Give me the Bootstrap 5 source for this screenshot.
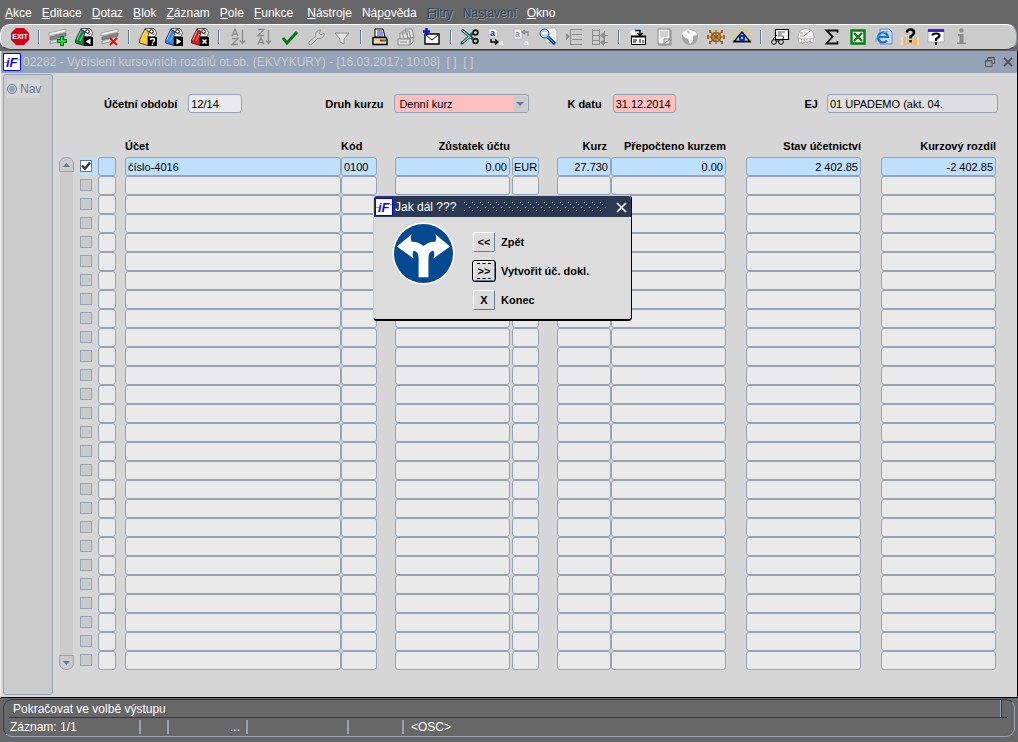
<!DOCTYPE html>
<html lang="cs">
<head>
<meta charset="utf-8">
<meta name="viewport" content="width=device-width, initial-scale=1">
<title>Vyčíslení kursovních rozdílů</title>
<link href="https://cdn.jsdelivr.net/npm/bootstrap@5.3.0/dist/css/bootstrap.min.css" rel="stylesheet">
<style>
:root{--line:#95a3b8;--navy:#2b3a52;--face:#cbcbcb;--canvas:#d6d6d6;--dark:#676767}
body{font:12px/16px "Liberation Sans",Arial,sans-serif;color:#000;background:var(--dark)}
.menubar{height:24px;gap:10px;padding:2px 5px 0;color:#fff}
.menubar div{gap:10px}
.menubar a{color:inherit;text-decoration:none}
.menubar a.off{color:#34445c;text-shadow:1px 1px 0 #8d9aa8}
.toolbar{height:26px;margin-right:1px;padding-left:6px;background:var(--face);border:1px solid #fff;border-bottom:1px solid var(--navy);border-right-color:var(--line);border-radius:10px}
.tool{width:26px;height:24px;border-radius:0;line-height:0}
.tool svg{width:20px;height:20px}
.divide{width:12px;height:14px;flex:none}
.divide::before{content:"";display:block;width:2px;height:14px;margin-left:5px;background:linear-gradient(90deg,#5f7a99 50%,#eee 50%)}
.win{border-left:1px solid #eee;border-right:1px solid #000;border-bottom:1px solid #000;background:var(--canvas);margin-top:1px}
.win-title{height:22px;padding-left:2px;padding-right:1px;background:var(--line);color:#ccc;gap:2px}
.logo{width:18px;height:18px;flex:none}
.logo text{font:italic bold 13px "Liberation Sans",Arial,sans-serif;fill:#1010c0}
.winbtn{width:16px;height:18px;line-height:0}
.side{width:50px;margin:1px 0 2px 2px;padding:4px 0 0 3px;background:var(--face);border:1px solid var(--line);border-radius:3px}
.navtag{width:33px;height:19px;background:#d6d6d6;color:#5f7a99;gap:3px}
.navtag input{appearance:none;flex:none;width:10px;height:10px;margin:0;border:1px solid #5f7a99;border-radius:50%;background:var(--line);box-shadow:inset 0 0 0 1px #d6d6d6}
.work{padding:21px 21px 27px 6px;font-size:11px;line-height:14px}
.formrow{height:19px;margin-bottom:25px;padding-left:45px}
.formrow label{font-weight:bold;margin-right:11px}
.formrow label.ms-auto{margin-right:9px}
.fld{display:block;height:19px;padding:0 2px;border:1px solid var(--line);border-radius:3px;background:#eaeaea;color:#000;outline:0;font-size:11px;line-height:17px;min-width:0}
.cur .fld{padding:0 0 0 1px}
.pink{background-color:#ffbfbf}
.f-period{width:54px;margin-right:83px}.f-kind{width:135px;margin-right:38px}.f-date{width:63px}.f-unit{width:171px;background:#dfdfdf;margin-right:-2px}
select.fld{appearance:none;padding:1px 4px 0;background-repeat:no-repeat;background-position:right 1px center;background-image:url("data:image/svg+xml,%3Csvg xmlns='http://www.w3.org/2000/svg' width='14' height='15'%3E%3Cpath fill='%23cbcbcb' d='M0 0h14v15H0z'/%3E%3Cpath fill='%235f7a99' d='M3 6h8l-4 4z'/%3E%3C/svg%3E")}
.scroller{width:15px;margin:19px 6px 0 0}
.cap{height:15px;border:1px solid var(--line);background:var(--face);line-height:0}
.cap.up{border-radius:7px 7px 0 0}.cap.down{border-radius:0 0 7px 7px}
.track{margin:0 1px;background:var(--face)}
.ledger{table-layout:fixed;width:100%;border-collapse:separate;border-spacing:0}
.ledger th,.ledger td{height:19px;padding:0;vertical-align:top}
.ledger .g2{padding-left:2px}.ledger .g9{padding-left:9px}.ledger .g18{padding-left:18px}.ledger .g20{padding-left:20px}
.ledger th{white-space:nowrap;padding-top:1px}
.ledger .r,.ledger .r .fld{text-align:right}
.c-18{width:18px}.c-29{width:29px}.c-36{width:36px}.c-72{width:72px}.c-115{width:115px}.c-133{width:133px}.c-135{width:135px}
.tick{appearance:none;display:block;width:12px;height:12px;margin:0;border:1px solid var(--line);background:var(--face)}
.tick:checked{border-color:#5f7a99;background:#fff url("data:image/svg+xml,%3Csvg xmlns='http://www.w3.org/2000/svg' viewBox='0 0 10 10'%3E%3Cpath fill='none' stroke='%232b3a52' stroke-width='2.4' d='M1 4.5l3 3.2L9 1.5'/%3E%3C/svg%3E")}
.current .fld,.current .tickbox{background:#bfdfff}
.tickbox{width:17px;height:18px;padding-top:3px}
.ask{left:calc(50% - 136px);top:195px;width:259px;background:#dcdcdc;border:1px solid var(--face);border-right:1px solid #000;border-bottom:2px solid #000;border-radius:4px;overflow:hidden}
.ask-title{height:21px;background:var(--navy);color:#fff;gap:2px;padding:0 4px 0 1px}
.dots{height:11px;margin:0 8px 0 6px}
.ask-body{padding:5px 18px 9px 18px}
.sign{width:63px;height:63px;margin-right:18px}
.choices{gap:9px;padding-top:10px}
.choices label{font-size:11px;font-weight:bold}
.choice{gap:6px}
.key{width:22px;height:20px;padding:0;border:1px solid #fff;border-right-color:#5f7a99;border-bottom-color:#5f7a99;border-radius:2px;background:#dcdcdc;color:#000;font-size:11px;font-weight:bold;line-height:16px}
.key.dflt{outline:1px solid #000}
.key.dflt span{display:block;margin:0 3px;border:1px dashed #000;border-left:0;border-right:0;line-height:14px}
.status{color:#fff;margin:1px 3px 5px;border:1px solid var(--line);border-top-color:var(--navy);border-left-color:var(--navy);border-radius:9px;height:38px}
.hint{height:18px;margin:0 7px 0 5px;padding:0 5px 0 4px;border-bottom:1px solid var(--navy)}
.hint i{width:2px;height:17px;border-left:1px solid var(--line);border-right:1px solid var(--navy)}
.panes{height:18px;padding:2px 0 2px 6px}
.panes span{line-height:14px;border-right:2px solid var(--navy);border-image:linear-gradient(90deg,var(--navy) 50%,var(--line) 50%) 0 2 0 0;border-image-width:0 2px 0 0}
.panes .p1{width:131px}.panes .p2{width:28px}.panes .p3{width:79px;padding-right:6px;text-align:right}.panes .p4{width:101px}.panes .p5{width:55px}
.panes .p6{border:0;padding-left:7px}
</style>
</head>
<body class="min-vh-100 d-flex flex-column">

<svg width="0" height="0" class="position-absolute" aria-hidden="true">
  <symbol id="binder" viewBox="0 0 20 20"><path d="M7 1.500h9l2.500 4-1 4h-8z" fill="#f4f4f4" stroke="#555"/><path d="M9 3l7 5M12 2.500l5 5" stroke="#888"/><circle cx="13.500" cy="4.500" r="1.800" fill="#fff" stroke="#000"/><path d="M7 2L1.500 13v3L10 18.500V9L11 5z" fill="currentColor" stroke="#222" stroke-width=".8"/><path d="M7 4l-4 9M9.500 7L6 14" stroke="#fff" stroke-opacity=".6"/><rect x="10" y="10" width="9" height="9" fill="#000"/></symbol>
  <symbol id="sheet" viewBox="0 0 20 20"><path d="M1 6l17-4v3L1 9z" fill="#f2f2f2" stroke="#999" stroke-width=".8"/><path d="M2 10l16-4v3L2 13z" fill="#888" stroke="#555" stroke-width=".6"/><path d="M2 14l14-4v3L2 17z" fill="#ddd" stroke="#888" stroke-width=".8"/></symbol>
</svg>

<nav class="menubar d-flex align-items-center" aria-label="Hlavní nabídka">
  <div class="d-flex"><a href="#"><u>A</u>kce</a><a href="#"><u>E</u>ditace</a><a href="#"><u>D</u>otaz</a><a href="#"><u>B</u>lok</a><a href="#"><u>Z</u>áznam</a><a href="#"><u>P</u>ole</a><a href="#"><u>F</u>unkce</a></div>
  <div class="d-flex ms-1"><a href="#"><u>N</u>ástroje</a><a href="#">Náp<u>o</u>věda</a><a href="#" class="off"><u>F</u>iltry</a><a href="#" class="off">Na<u>s</u>tavení</a><a href="#"><u>O</u>kno</a></div>
</nav>

<div class="toolbar d-flex align-items-center" role="toolbar" aria-label="Panel nástrojů">
  <button class="btn tool p-0 border-0" aria-label="Konec"><svg viewBox="0 0 20 20"><path d="M6 1h8l5 5v7l-5 5H6l-5-5V6z" fill="#d8001c"/><text x="10" y="12" text-anchor="middle" font-family="Liberation Sans" font-size="7" font-weight="bold" fill="#fff">EXIT</text></svg></button>
  <span class="divide"></span>
  <button class="btn tool p-0 border-0" aria-label="Vložit záznam"><svg viewBox="0 0 20 20"><use href="#sheet"/><path d="M14 9v10M9 14h10" stroke="#063" stroke-width="4"/><path d="M14 10v8M10 14h8" stroke="#2d2" stroke-width="2"/></svg></button>
  <button class="btn tool p-0 border-0" aria-label="Předchozí blok"><svg viewBox="0 0 20 20" color="#0a8a3a"><use href="#binder"/><path d="M16.500 11.500v6l-5-3z" fill="#fff"/></svg></button>
  <button class="btn tool p-0 border-0" aria-label="Smazat záznam"><svg viewBox="0 0 20 20"><use href="#sheet"/><path d="M10 11l7 7M17 11l-7 7" stroke="#e01010" stroke-width="2"/></svg></button>
  <span class="divide"></span>
  <button class="btn tool p-0 border-0" aria-label="Zadat dotaz"><svg viewBox="0 0 20 20" color="#ffc820"><use href="#binder"/><path d="M12.500 13q0-1.500 2-1.500t2 1.500q0 1-2 2.500M14.500 16.500v1.500" fill="none" stroke="#fff" stroke-width="1.500"/></svg></button>
  <button class="btn tool p-0 border-0" aria-label="Provést dotaz"><svg viewBox="0 0 20 20" color="#2888f0"><use href="#binder"/><path d="M12.500 11.500v6l5-3z" fill="#fff"/></svg></button>
  <button class="btn tool p-0 border-0" aria-label="Zrušit dotaz"><svg viewBox="0 0 20 20" color="#e01818"><use href="#binder"/><path d="M12.500 12.500l4 4M16.500 12.500l-4 4" stroke="#fff" stroke-width="1.500"/></svg></button>
  <span class="divide"></span>
  <button class="btn tool p-0 border-0" aria-label="Seřadit vzestupně"><svg viewBox="0 0 20 20" fill="none" stroke="#8c8c8c"><path d="M4 9l3-7 3 7M5 7h4M4 11.500h6l-6 6h6M14.500 3v13M12 13.500l2.500 3 2.500-3" stroke-width="1.300"/></svg></button>
  <button class="btn tool p-0 border-0" aria-label="Seřadit sestupně"><svg viewBox="0 0 20 20" fill="none" stroke="#8c8c8c"><path d="M4 2.500h6l-6 6h6M4 17.500l3-7 3 7M5 15.500h4M14.500 3v13M12 13.500l2.500 3 2.500-3" stroke-width="1.300"/></svg></button>
  <button class="btn tool p-0 border-0" aria-label="Uložit"><svg viewBox="0 0 20 20"><path d="M3 11l4 5L17 5" fill="none" stroke="#007a1c" stroke-width="3"/></svg></button>
  <button class="btn tool p-0 border-0" aria-label="Nastavit"><svg viewBox="0 0 20 20"><path d="M3 15l7-6c-1-3 1-6 5-6l-2 3 2 2 3-2c1 4-3 6-6 5l-7 7q-3 0-2-3z" fill="#d6d6d6" stroke="#8c8c8c"/></svg></button>
  <button class="btn tool p-0 border-0" aria-label="Filtr"><svg viewBox="0 0 20 20"><path d="M3 6h14l-5 6v5l-4-2v-3z" fill="#e4e4e4" stroke="#8c8c8c"/></svg></button>
  <span class="divide"></span>
  <button class="btn tool p-0 border-0" aria-label="Tisk"><svg viewBox="0 0 20 20"><path d="M5 2h8l2 8H5z" fill="#fff" stroke="#000"/><path d="M7 4h5M7 6h6M7 8h6" stroke="#1030c0"/><path d="M3 10.500h13l1 2v5H3z" fill="#ddd" stroke="#000" stroke-width="1.400"/><path d="M4 13h7" stroke="#e0e040" stroke-width="2"/><path d="M10 13.500h3" stroke="#e00000" stroke-width="2"/><path d="M13 13.500h3" stroke="#00a000" stroke-width="2"/></svg></button>
  <button class="btn tool p-0 border-0" aria-label="Tisk více"><svg viewBox="0 0 20 20" fill="#e0e0e0" stroke="#8c8c8c"><path d="M9 2h7l2 9h-6zM6 4h7l2 8H8zM4 6h7l1 6H4z"/><path d="M2 12h12v6H2zM14 12l3-2v5l-3 3zM4 15h7"/></svg></button>
  <button class="btn tool p-0 border-0" aria-label="Poslat poštou"><svg viewBox="0 0 20 20"><path d="M3 7h14v10H3z" fill="#fff" stroke="#000" stroke-width="1.400"/><path d="M4 8l6 5 6-5" fill="none" stroke="#000"/><path d="M4.500 1v7M1 4.500h7" stroke="#0018e0" stroke-width="2.500"/></svg></button>
  <span class="divide"></span>
  <button class="btn tool p-0 border-0" aria-label="Vyjmout"><svg viewBox="0 0 20 20"><path d="M2 3l11 9M1 17L13 6" stroke="#145a60" stroke-width="3"/><path d="M2 3l9 8M2 16l8-7" stroke="#d8ffff"/><circle cx="15.500" cy="5.500" r="2.400" fill="none" stroke="#111" stroke-width="1.600"/><circle cx="15.500" cy="14" r="2.400" fill="none" stroke="#111" stroke-width="1.600"/></svg></button>
  <button class="btn tool p-0 border-0" aria-label="Kopírovat"><svg viewBox="0 0 20 20"><path d="M3 2h6l2 2v6H3z" fill="#fff" stroke="#bbb" stroke-width=".7"/><text x="4" y="9" font-family="Liberation Sans" font-size="9" font-weight="bold" fill="#0820c8">a</text><path d="M5 12v3h6M9 12.500l3 2.500-3 2.500" fill="none" stroke="#000" stroke-width="1.400"/><text x="13" y="18" font-family="Liberation Sans" font-size="8" fill="#fff">a</text></svg></button>
  <button class="btn tool p-0 border-0" aria-label="Vložit"><svg viewBox="0 0 20 20"><path d="M2 2h6l2 2v8H2z" fill="#eee" stroke="#aaa" stroke-width=".7"/><text x="3" y="10" font-family="Liberation Sans" font-size="9" fill="#888">a</text><path d="M16 9V5h-5M13 3l-3 2 3 2" fill="none" stroke="#888" stroke-width="1.300"/><text x="12" y="18" font-family="Liberation Sans" font-size="8" fill="#fff">a</text></svg></button>
  <button class="btn tool p-0 border-0" aria-label="Prohlížet"><svg viewBox="0 0 20 20"><path d="M8 1h9l2 3v12H8z" fill="#eee" stroke="#b4b4a0"/><circle cx="6.500" cy="6.500" r="4.500" fill="#a8dcf4" stroke="#348"/><path d="M4 6h5" stroke="#fff" stroke-width="2"/><path d="M10 10l7 7" stroke="#0448a8" stroke-width="3.400"/><path d="M10 10l6 6" stroke="#40b0ff"/></svg></button>
  <button class="btn tool p-0 border-0" aria-label="Odsadit"><svg viewBox="0 0 20 20"><path d="M6 2.500h12M8 7.500h10M8 12.500h10M6 17.500h12M2.500 7v6M6.500 2v16" stroke="#8c8c8c"/><path d="M2 6l4 3.500L2 13z" fill="#8c8c8c"/></svg></button>
  <button class="btn tool p-0 border-0" aria-label="Rozdělit"><svg viewBox="0 0 20 20"><path d="M2.500 2v16M9.500 2v16M3 3.500h6M3 8.500h6M3 13.500h6M3 17.500h6M11 8.500h7M11 15.500h7M14.500 4v13" stroke="#8c8c8c"/><path d="M14 5l-4 3.500L14 12zM14 12l-4 3.500L14 19z" fill="#8c8c8c"/></svg></button>
  <span class="divide"></span>
  <button class="btn tool p-0 border-0" aria-label="Kalendář"><svg viewBox="0 0 20 20"><path d="M1 1.500h13" stroke="#a8dcff"/><path d="M2 3h9v6H2z" fill="#e4e4e4"/><path d="M3 5h6M3 7h4" stroke="#fff"/><path d="M3.500 9.500h14v8h-14z" fill="#fff" stroke="#000"/><path d="M3 9.500h15" stroke="#000" stroke-width="2"/><path d="M5 13h4M5 15h3M11 13h2M11 15h2M15 13v3" stroke="#000"/><path d="M7 3.500h5v4M9.500 6l2.500 3 2.500-3" fill="none" stroke="#000" stroke-width="1.300"/></svg></button>
  <button class="btn tool p-0 border-0" aria-label="Poznámka"><svg viewBox="0 0 20 20"><path d="M4 2h12v15H4z" fill="#eee" stroke="#888"/><path d="M6 5h8M6 7h8M6 9h8" stroke="#b4b4b4"/><path d="M10 17v-5h6zM4 18h13V3" fill="none" stroke="#888"/></svg></button>
  <button class="btn tool p-0 border-0" aria-label="Internet"><svg viewBox="0 0 20 20"><circle cx="10" cy="10" r="8" fill="#a4a4a4"/><path d="M3 5l5-3 8 3 1 3-4 1v5l-3 3-2-5-4-2-2-3z" fill="#f8f8f8"/><path d="M7 3l3 2-2 2z" fill="#b4b4b4"/></svg></button>
  <button class="btn tool p-0 border-0" aria-label="Navigátor"><svg viewBox="0 0 20 20" stroke="#9a5a10" fill="none"><circle cx="10" cy="10" r="4.500" stroke-width="1.700"/><path d="M10 3v14M3 10h14M4.500 5l11 10M15.500 5l-11 10" stroke-width="1.200"/><path d="M2 8v4M18 8v4M4 3v3M16 3v3M4 14v3M16 14v3" stroke-width="1.800"/></svg></button>
  <button class="btn tool p-0 border-0" aria-label="Zobrazit"><svg viewBox="0 0 20 20"><path d="M10 5L2 14.500h16z" fill="#b8e8ff" stroke="#000" stroke-width="1.400"/><path d="M1 14.500h18" stroke="#000" stroke-width="1.500"/><circle cx="10" cy="11" r="3.200" fill="#0828e0"/><path d="M9 10h2v2H9z" fill="#8ff"/><path d="M10 1v2M5 3l1 2M15 3l-1 2M1 7l3 2M19 7l-3 2" stroke="#e8d800" stroke-width="1.500"/></svg></button>
  <span class="divide"></span>
  <button class="btn tool p-0 border-0" aria-label="Detail"><svg viewBox="0 0 20 20"><path d="M5.500 2.500h13v10h-13z" fill="#fff" stroke="#000" stroke-width="1.200"/><path d="M8 5h7M8 7h4M8 9h6" stroke="#555"/><g fill="#ddd" stroke="#000"><circle cx="4" cy="15" r="2.300"/><circle cx="11" cy="15" r="2.300"/></g><path d="M6 14h3M3 12l4-4M12 13l2-3" stroke="#000"/></svg></button>
  <button class="btn tool p-0 border-0" aria-label="Hodiny"><svg viewBox="0 0 20 20"><circle cx="10" cy="9.500" r="8" fill="#eee" stroke="#aaa"/><path d="M4 9h4l6-5M4 6h3" fill="none" stroke="#999"/><path d="M3 11.500h14v4H3z" fill="#fff" stroke="#aaa" stroke-width=".6"/><text x="4" y="15.500" font-family="Liberation Sans" font-size="5" fill="#777">1314</text></svg></button>
  <button class="btn tool p-0 border-0" aria-label="Součet"><svg viewBox="0 0 20 20"><path d="M15.500 6V3.500H4.500l6 6-6 7h11V14" fill="none" stroke="#111" stroke-width="1.800"/></svg></button>
  <button class="btn tool p-0 border-0" aria-label="Excel"><svg viewBox="0 0 20 20"><path d="M3.500 3.500h13v13h-13z" fill="#e8f4e4" stroke="#107818" stroke-width="2.400"/><path d="M6 6l8 8M14 6l-8 8" stroke="#107818" stroke-width="2.200"/></svg></button>
  <button class="btn tool p-0 border-0" aria-label="Prohlížeč"><svg viewBox="0 0 20 20"><path d="M6 2h9l3 3v12H6z" fill="#c0dcf8" stroke="#6888c0"/><path d="M13 13.500a5 5 0 1 1 1-3.500H5" fill="none" stroke="#1874d0" stroke-width="2.200"/><path d="M2 15Q0 9 14 4" fill="none" stroke="#50a8f0"/></svg></button>
  <button class="btn tool p-0 border-0" aria-label="Kontextová nápověda"><svg viewBox="0 0 20 20"><path d="M1 10h5v8H1zM7.500 12h5v6h-5zM14 10h5v8h-5z" fill="#f0b868"/><path d="M2 10v8M10 12v6M18 10v8" stroke="#fff"/><path d="M7 5.500q0-3 3.500-3T14 5.500q0 2-3.500 4v2M10.500 13v2.500" fill="none" stroke="#000" stroke-width="2.400"/></svg></button>
  <button class="btn tool p-0 border-0" aria-label="Nápověda"><svg viewBox="0 0 20 20"><path d="M2 3h16v12H2z" fill="#fff" stroke="#aaa"/><path d="M2 3.500h16" stroke="#4818e8" stroke-width="3"/><path d="M6.500 8.500q0-2 3.500-2t3.500 2q0 1.500-3.500 3.500v2M10 15.500v2.500" fill="none" stroke="#000" stroke-width="2.200"/></svg></button>
  <button class="btn tool p-0 border-0" aria-label="Informace"><svg viewBox="0 0 20 20" fill="#8c8c8c"><circle cx="9.500" cy="3.500" r="2.200"/><path d="M6 7h5.500v8.500H14V17H5v-1.500h2.500V9H6z"/></svg></button>
</div>

<div class="win flex-grow-1 d-flex flex-column">
  <header class="win-title d-flex align-items-center">
    <svg class="logo" viewBox="0 0 18 18"><path d="M.5.5h17v17H.5z" fill="#fff" stroke="#00f"/><path d="M1 9.500h3M15 6.500h2" stroke="#9ab"/><text x="3" y="14">iF</text></svg>
    <span class="flex-grow-1 text-truncate">02282 - Vyčíslení kursovních rozdílů ot.ob. (EKVYKURY) - [16.03.2017; 10:08]&nbsp; [ ]&nbsp; [ ]</span>
    <button class="btn winbtn p-0 border-0" aria-label="Obnovit okno"><svg width="12" height="12" fill="none" stroke="#555"><path d="M3.500 4V1.500h7v6H8M1.500 4.500H8v6H1.500zM4 2h7M2 5h6"/></svg></button>
    <button class="btn winbtn p-0 border-0" aria-label="Zavřít okno"><svg width="12" height="12"><path d="M2 2l8 8M10 2l-8 8" stroke="#555" stroke-width="2"/></svg></button>
  </header>
  <div class="d-flex flex-grow-1">
    <aside class="side flex-shrink-0">
      <div class="navtag d-flex align-items-center"><input type="radio" id="nav"><label for="nav">Nav</label></div>
    </aside>
    <main class="work flex-grow-1">
      <form class="formrow d-flex align-items-center">
        <label for="period">Účetní období</label><input class="fld f-period" id="period" value="12/14">
        <label for="kind">Druh kurzu</label><select class="fld pink f-kind" id="kind"><option>Denní kurz</option></select>
        <label for="date">K datu</label><input class="fld pink f-date" id="date" value="31.12.2014">
        <label for="unit" class="ms-auto">EJ</label><input class="fld f-unit" id="unit" value="01 UPADEMO (akt. 04." readonly>
      </form>
      <div class="d-flex">
        <div class="scroller d-flex flex-column flex-shrink-0">
          <button class="cap up p-0" aria-label="Nahoru"><svg width="7" height="4"><path d="M0 4h7L3.500 0z" fill="#5f7a99"/></svg></button>
          <div class="track flex-grow-1"></div>
          <button class="cap down p-0" aria-label="Dolů"><svg width="7" height="4"><path d="M0 0h7L3.500 4z" fill="#5f7a99"/></svg></button>
        </div>
        <table class="ledger">
          <thead><tr>
            <th class="c-18" aria-label="Výběr"></th><th class="c-18" aria-label="Stav"></th><th class="g9">Účet</th><th class="c-36">Kód</th>
            <th class="c-133 g18 r">Zůstatek účtu</th><th class="c-29" aria-label="Měna"></th><th class="c-72 g18 r pe-1">Kurz</th>
            <th class="c-115 r">Přepočteno kurzem</th><th class="c-135 g20 r">Stav účetnictví</th><th class="c-135 g20 r">Kurzový rozdíl</th>
          </tr></thead>
          <tbody id="rows"></tbody>
        </table>
      </div>
    </main>
  </div>
</div>

<section class="ask position-absolute" role="dialog" aria-label="Jak dál ???">
  <header class="ask-title d-flex align-items-center">
    <svg class="logo" viewBox="0 0 18 18"><path d="M.5.5h17v17H.5z" fill="#fff" stroke="#00f"/><path d="M1 9.500h3M15 6.500h2" stroke="#9ab"/><text x="3" y="14">iF</text></svg><span>Jak dál ???</span>
    <svg class="dots flex-grow-1 w-25" aria-hidden="true"><defs><pattern id="dot" width="8" height="8" patternUnits="userSpaceOnUse"><path d="M0 1h1v1H0zM2 3h1v1H2zM5 6h1v1H5z" fill="#c8d0dc"/><path d="M1 2h1v1H1zM3 4h1v1H3zM6 7h1v1H6z" fill="#000"/></pattern></defs><rect width="100%" height="11" fill="url(#dot)"/></svg>
    <button class="btn p-0 border-0 lh-1" aria-label="Zavřít"><svg width="11" height="11"><path d="M1 1l9 9M10 1l-9 9" stroke="#fff" stroke-width="1.600"/></svg></button>
  </header>
  <div class="ask-body d-flex">
    <svg class="sign flex-shrink-0" viewBox="0 0 64 64" aria-hidden="true"><circle cx="32" cy="32" r="31.500" fill="#fff"/><circle cx="32" cy="32" r="30" fill="#054a91"/><path d="M5 25L20 12.500q-2 4 0 7.500 7 0 12 4.500 5-4.500 12-4.500 2-3.500 0-7.500L59 25 42 37q2-4 0-8-5 1-5 8v19H27V37q0-7-5-8-2 4 0 8z" fill="#fff"/></svg>
    <div class="choices d-flex flex-column">
      <div class="choice d-flex align-items-center"><button class="key" id="back">&lt;&lt;</button><label for="back">Zpět</label></div>
      <div class="choice d-flex align-items-center"><button class="key dflt" id="make"><span>&gt;&gt;</span></button><label for="make">Vytvořit úč. dokl.</label></div>
      <div class="choice d-flex align-items-center"><button class="key" id="quit">X</button><label for="quit">Konec</label></div>
    </div>
  </div>
</section>

<footer class="status">
  <div class="hint d-flex justify-content-between align-items-center"><span>Pokračovat ve volbě výstupu</span><i></i></div>
  <div class="panes d-flex"><span class="p1">Záznam: 1/1</span><span class="p2"></span><span class="p3">...</span><span class="p4"></span><span class="p5"></span><span class="p6">&lt;OSC&gt;</span></div>
</footer>

<script src="https://cdn.jsdelivr.net/npm/bootstrap@5.3.0/dist/js/bootstrap.bundle.min.js"></script>
<script>
const columns = [['Stav',''],['Účet','g9'],['Kód',''],['Zůstatek účtu','g18 r'],['Měna','g2 cur'],['Kurz','g18 r'],['Přepočteno kurzem','r'],['Stav účetnictví','g20 r'],['Kurzový rozdíl','g20 r']];
const records = [['','číslo-4016','0100','0.00','EUR','27.730','0.00','2 402.85','-2 402.85']];
const visibleRows = 27;
let html = '';
for (let i = 0; i < visibleRows; i++) {
  const rec = records[i];
  html += `<tr class="${i === 0 ? 'current' : ''}"><td><div class="tickbox"><input type="checkbox" class="tick" aria-label="Výběr ${i + 1}"${rec ? ' checked' : ''}></div></td>`;
  columns.forEach(([name, cls], c) => {
    html += `<td class="${cls}"><input class="fld w-100" aria-label="${name} ${i + 1}" value="${rec ? rec[c] : ''}"></td>`;
  });
  html += '</tr>';
}
document.getElementById('rows').innerHTML = html;
</script>
</body>
</html>
